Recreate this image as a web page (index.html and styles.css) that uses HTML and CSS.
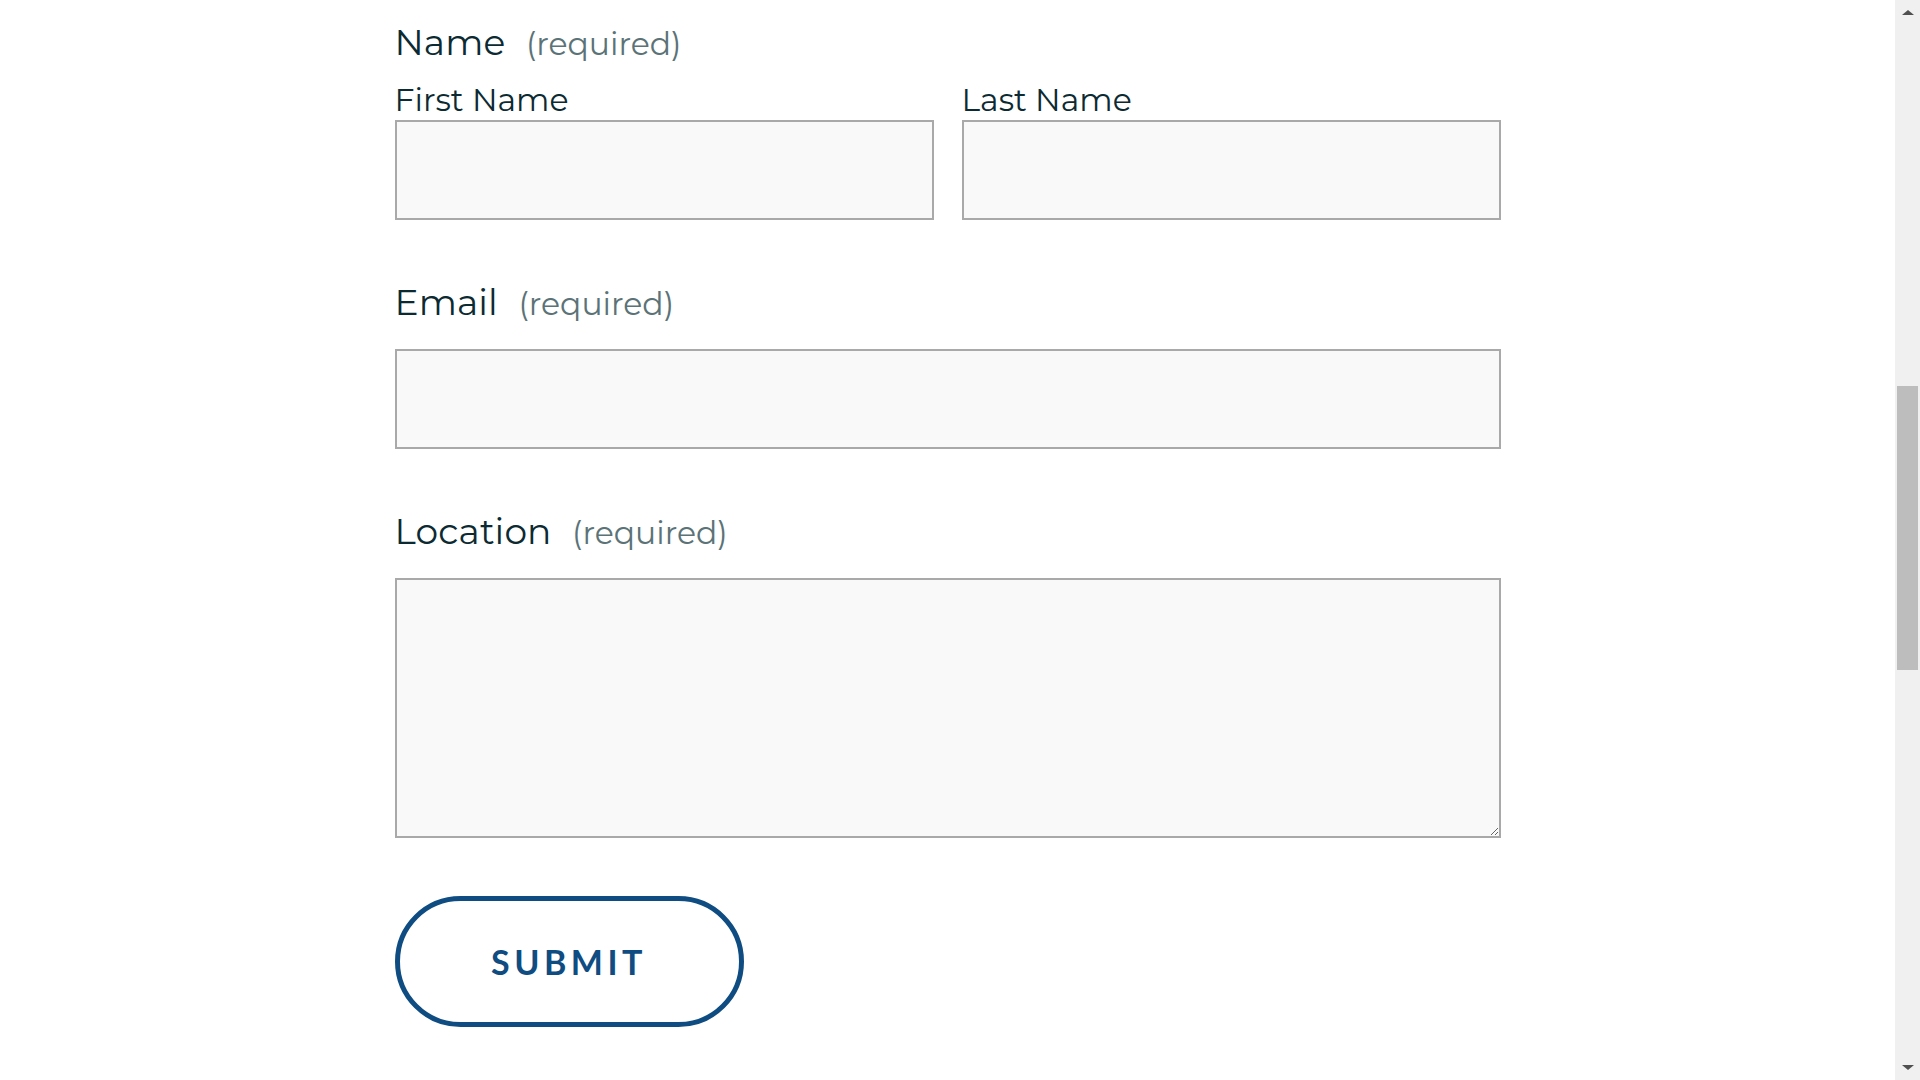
FILE: index.html
```html
<!DOCTYPE html>
<html lang="en">
<head>
    <meta charset="UTF-8">
    <meta name="viewport" content="width=device-width, initial-scale=1.0">
    <title>Contact Form</title>
    <link rel="stylesheet" href="styles.css">
</head>
<body>

<main class="page">
    <form class="contact-form" onsubmit="return false;">

        <!-- Name -->
        <div class="field">
            <div class="field-title">Name <span class="required">(required)</span></div>
            <div class="name-row">
                <div class="name-col">
                    <label class="sub-label" for="fname">First Name</label>
                    <input type="text" id="fname" name="fname" class="text-input">
                </div>
                <div class="name-col">
                    <label class="sub-label" for="lname">Last Name</label>
                    <input type="text" id="lname" name="lname" class="text-input">
                </div>
            </div>
        </div>

        <!-- Email -->
        <div class="field">
            <label class="field-title spaced" for="email">Email <span class="required">(required)</span></label>
            <input type="email" id="email" name="email" class="text-input">
        </div>

        <!-- Location -->
        <div class="field field-last">
            <label class="field-title spaced" for="location">Location <span class="required">(required)</span></label>
            <textarea id="location" name="location" class="text-area"></textarea>
        </div>

        <button type="submit" class="submit-btn">Submit</button>
    </form>
</main>

<!-- fake scrollbar -->
<aside class="scrollbar">
    <div class="arrow arrow-up"></div>
    <div class="track">
        <div class="thumb"></div>
    </div>
    <div class="arrow arrow-down"></div>
</aside>

</body>
</html>
```

FILE: styles.css
```css
/* Styles */
html, body {
    height: 100%;
}

body {
    margin: 0;
    padding: 0;
    display: flex;
    overflow: hidden;
    background-color: #fff;
    font-family: Montserrat, "Open Sans", sans-serif;
    color: #0c2a32;
}

.page {
    flex: 1;
}

.contact-form {
    width: 1106px;
    margin: 0 auto;
    padding-top: 20px;
}

.field {
    margin-bottom: 60px;
}

.field-last {
    margin-bottom: 58px;
}

.field-title {
    display: block;
    font-size: 36px;
    line-height: 44px;
    letter-spacing: 0.1px;
}

.field-title.spaced {
    margin-bottom: 25px;
}

.required {
    margin-left: 11px;
    font-size: 31.5px;
    line-height: 1;
    letter-spacing: 0;
    color: #5b7377;
}

.name-row {
    display: flex;
    gap: 28px;
    margin-top: 18px;
}

.name-col {
    flex: 1;
    display: flex;
    flex-direction: column;
}

.sub-label {
    font-size: 31.5px;
    line-height: 36px;
    margin-bottom: 2px;
}

.text-input, .text-area {
    box-sizing: border-box;
    width: 100%;
    height: 100px;
    margin: 0;
    padding: 10px;
    border: 2px solid #a9a9a9;
    border-radius: 0;
    background-color: #f9f9f9;
    font-family: inherit;
    font-size: 20px;
    display: block;
}

.text-area {
    height: 260px;
    resize: vertical;
}

.submit-btn {
    box-sizing: border-box;
    width: 349px;
    height: 131px;
    border: 5px solid #0f4c81;
    border-radius: 66px;
    background-color: #fff;
    color: #0f4c81;
    font-family: Lato, sans-serif;
    font-weight: 700;
    font-size: 34px;
    letter-spacing: 4.5px;
    text-transform: uppercase;
    padding: 0;
    cursor: pointer;
}

/* scrollbar imitation */
.scrollbar {
    width: 25px;
    background-color: #f0f0f0;
    display: flex;
    flex-direction: column;
    align-items: center;
}

.arrow {
    height: 25px;
    width: 100%;
    display: flex;
    align-items: center;
    justify-content: center;
}

.arrow::after {
    content: "";
    width: 0;
    height: 0;
    border-left: 6px solid transparent;
    border-right: 6px solid transparent;
}

.arrow-up::after {
    border-bottom: 5px solid #505050;
}

.arrow-down::after {
    border-top: 5px solid #505050;
}

.track {
    flex: 1;
    width: 100%;
    display: flex;
    justify-content: center;
}

.thumb {
    width: 21px;
    height: 284px;
    margin-top: 361px;
    background-color: #bdbdbd;
}
```
